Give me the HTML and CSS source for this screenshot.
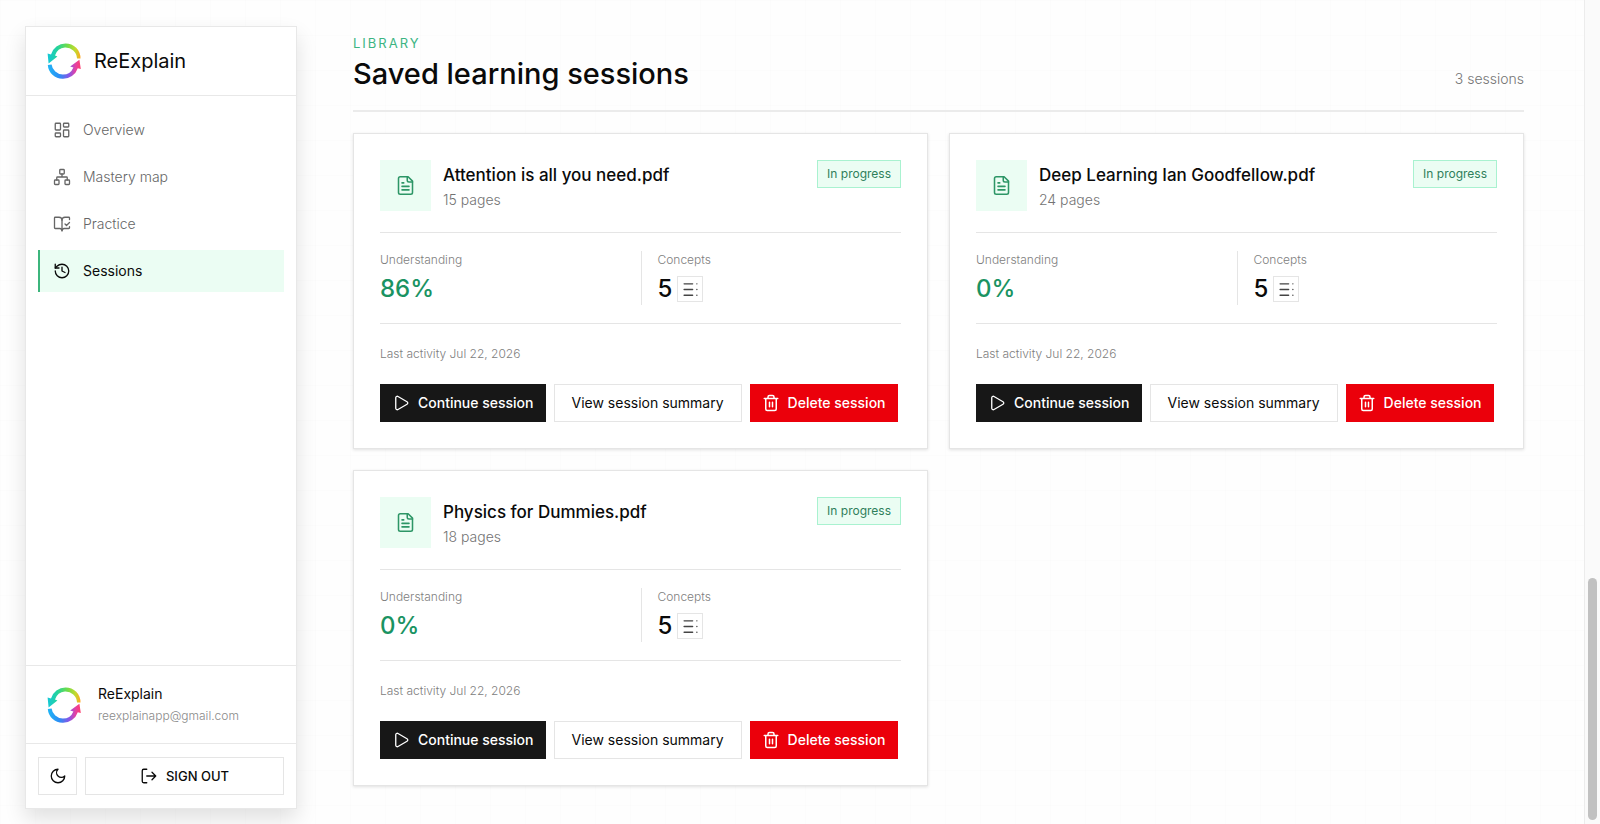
FILE: index.html
```html
<!DOCTYPE html>
<html lang="en">
<head>
  <meta charset="UTF-8">
  <meta name="viewport" content="width=device-width, initial-scale=1.0">
  <title>ReExplain - Saved learning sessions</title>
  <link rel="stylesheet" href="styles.css">
</head>
<body>
  <!-- Shared icons -->
  <svg class="sprite" aria-hidden="true">
    <defs>
      <linearGradient id="arc-top" x1="0" y1="0" x2="1" y2="0">
        <stop offset="0" stop-color="#14c8d8"/>
        <stop offset="0.3" stop-color="#25d39b"/>
        <stop offset="0.6" stop-color="#6fdc4a"/>
        <stop offset="0.85" stop-color="#c4d92e"/>
        <stop offset="1" stop-color="#ffa51f"/>
      </linearGradient>
      <linearGradient id="arc-bottom" x1="0" y1="0" x2="1" y2="0">
        <stop offset="0" stop-color="#1fb6f5"/>
        <stop offset="0.35" stop-color="#2b8df5"/>
        <stop offset="0.65" stop-color="#8a55e6"/>
        <stop offset="0.85" stop-color="#e8409f"/>
        <stop offset="1" stop-color="#ff3d6e"/>
      </linearGradient>
    </defs>
    <symbol id="logo" viewBox="0 0 34 36">
      <path fill="url(#arc-top)" d="M.6 10.4 L4 11.4 A15.5 15.5 0 0 1 18.5 .4 A14.8 14.8 0 0 1 33.5 15.6 L30 15.6 A11.5 11.5 0 0 0 18 4.6 A11.5 11.5 0 0 0 8 12.6 L10.4 13.6 L1.6 20.4 Z"/>
      <path fill="url(#arc-bottom)" d="M33.8 26 L30.8 25.2 A15.5 15.5 0 0 1 15.5 35.8 A14.8 14.8 0 0 1 .8 22 L4.6 21.4 A11.5 11.5 0 0 0 15.8 31.6 A11.5 11.5 0 0 0 26.4 24.4 L23.2 23.6 L32.4 16.8 Z"/>
    </symbol>
    <symbol id="file" viewBox="0 0 24 24">
      <path d="M15 2H6a2 2 0 0 0-2 2v16a2 2 0 0 0 2 2h12a2 2 0 0 0 2-2V7Z"/>
      <path d="M14 2v4a2 2 0 0 0 2 2h4M10 9H8M16 13H8M16 17H8"/>
    </symbol>
    <symbol id="list" viewBox="0 0 24 24">
      <path d="M3 4h12M3 12h12M3 20h12M21 4h.01M21 12h.01M21 20h.01"/>
    </symbol>
    <symbol id="play" viewBox="0 0 24 24">
      <path d="M5 5a2 2 0 0 1 3.008-1.728l11.997 6.998a2 2 0 0 1 .003 3.458l-12 7A2 2 0 0 1 5 19z"/>
    </symbol>
    <symbol id="trash" viewBox="0 0 24 24">
      <path d="M3 6h18M19 6v14a2 2 0 0 1-2 2H7a2 2 0 0 1-2-2V6M8 6V4a2 2 0 0 1 2-2h4a2 2 0 0 1 2 2v2M10 11v6M14 11v6"/>
    </symbol>
  </svg>

  <div class="app">
    <aside class="sidebar">
      <div class="brand">
        <svg class="logo"><use href="#logo"/></svg>
        <span class="brand-name">ReExplain</span>
      </div>

      <nav class="nav">
        <a class="nav-link" href="#overview">
          <svg class="icon" viewBox="0 0 24 24"><rect width="7" height="9" x="3" y="3" rx="1"/><rect width="7" height="5" x="14" y="3" rx="1"/><rect width="7" height="9" x="14" y="12" rx="1"/><rect width="7" height="5" x="3" y="16" rx="1"/></svg>
          Overview
        </a>
        <a class="nav-link" href="#mastery">
          <svg class="icon" viewBox="0 0 24 24"><rect x="16" y="16" width="6" height="6" rx="1"/><rect x="2" y="16" width="6" height="6" rx="1"/><rect x="9" y="2" width="6" height="6" rx="1"/><path d="M5 16v-3a1 1 0 0 1 1-1h12a1 1 0 0 1 1 1v3M12 12V8"/></svg>
          Mastery map
        </a>
        <a class="nav-link" href="#practice">
          <svg class="icon" viewBox="0 0 24 24"><path d="M12 21V7M16 12l2 2 4-4"/><path d="M22 6V4a1 1 0 0 0-1-1h-5a4 4 0 0 0-4 4 4 4 0 0 0-4-4H3a1 1 0 0 0-1 1v13a1 1 0 0 0 1 1h6a3 3 0 0 1 3 3 3 3 0 0 1 3-3h6a1 1 0 0 0 1-1v-1.3"/></svg>
          Practice
        </a>
        <a class="nav-link active" href="#sessions" aria-current="page">
          <svg class="icon" viewBox="0 0 24 24"><path d="M3 12a9 9 0 1 0 9-9 9.75 9.75 0 0 0-6.74 2.74L3 8"/><path d="M3 3v5h5M12 7v5l4 2"/></svg>
          Sessions
        </a>
      </nav>

      <div class="account">
        <svg class="logo"><use href="#logo"/></svg>
        <div>
          <div class="account-name">ReExplain</div>
          <div class="account-email">reexplainapp@gmail.com</div>
        </div>
      </div>

      <div class="sidebar-actions">
        <button class="btn btn-theme" type="button" aria-label="Toggle theme">
          <svg class="icon" viewBox="0 0 24 24"><path d="M12 3a6 6 0 0 0 9 9 9 9 0 1 1-9-9Z"/></svg>
        </button>
        <button class="btn btn-signout" type="button">
          <svg class="icon" viewBox="0 0 24 24"><path d="M9 21H5a2 2 0 0 1-2-2V5a2 2 0 0 1 2-2h4M16 17l5-5-5-5M21 12H9"/></svg>
          SIGN OUT
        </button>
      </div>
    </aside>

    <main class="content">
      <header class="page-header">
        <div>
          <p class="eyebrow">LIBRARY</p>
          <h1>Saved learning sessions</h1>
        </div>
        <span class="count">3 sessions</span>
      </header>

      <section class="session-grid">
        <article class="card">
          <div class="card-header">
            <div class="file-icon"><svg class="icon"><use href="#file"/></svg></div>
            <div class="card-title">
              <h2>Attention is all you need.pdf</h2>
              <p>15 pages</p>
            </div>
            <span class="badge">In progress</span>
          </div>
          <div class="stats">
            <div class="stat">
              <span class="label">Understanding</span>
              <div class="value score">86%</div>
            </div>
            <div class="stat">
              <span class="label">Concepts</span>
              <div class="value">5 <button class="list-btn" type="button" aria-label="Show concepts"><svg class="icon"><use href="#list"/></svg></button></div>
            </div>
          </div>
          <p class="activity">Last activity Jul 22, 2026</p>
          <div class="actions">
            <button class="btn btn-primary" type="button"><svg class="icon"><use href="#play"/></svg>Continue session</button>
            <button class="btn btn-summary" type="button">View session summary</button>
            <button class="btn btn-danger" type="button"><svg class="icon"><use href="#trash"/></svg>Delete session</button>
          </div>
        </article>

        <article class="card">
          <div class="card-header">
            <div class="file-icon"><svg class="icon"><use href="#file"/></svg></div>
            <div class="card-title">
              <h2>Deep Learning Ian Goodfellow.pdf</h2>
              <p>24 pages</p>
            </div>
            <span class="badge">In progress</span>
          </div>
          <div class="stats">
            <div class="stat">
              <span class="label">Understanding</span>
              <div class="value score">0%</div>
            </div>
            <div class="stat">
              <span class="label">Concepts</span>
              <div class="value">5 <button class="list-btn" type="button" aria-label="Show concepts"><svg class="icon"><use href="#list"/></svg></button></div>
            </div>
          </div>
          <p class="activity">Last activity Jul 22, 2026</p>
          <div class="actions">
            <button class="btn btn-primary" type="button"><svg class="icon"><use href="#play"/></svg>Continue session</button>
            <button class="btn btn-summary" type="button">View session summary</button>
            <button class="btn btn-danger" type="button"><svg class="icon"><use href="#trash"/></svg>Delete session</button>
          </div>
        </article>

        <article class="card">
          <div class="card-header">
            <div class="file-icon"><svg class="icon"><use href="#file"/></svg></div>
            <div class="card-title">
              <h2>Physics for Dummies.pdf</h2>
              <p>18 pages</p>
            </div>
            <span class="badge">In progress</span>
          </div>
          <div class="stats">
            <div class="stat">
              <span class="label">Understanding</span>
              <div class="value score">0%</div>
            </div>
            <div class="stat">
              <span class="label">Concepts</span>
              <div class="value">5 <button class="list-btn" type="button" aria-label="Show concepts"><svg class="icon"><use href="#list"/></svg></button></div>
            </div>
          </div>
          <p class="activity">Last activity Jul 22, 2026</p>
          <div class="actions">
            <button class="btn btn-primary" type="button"><svg class="icon"><use href="#play"/></svg>Continue session</button>
            <button class="btn btn-summary" type="button">View session summary</button>
            <button class="btn btn-danger" type="button"><svg class="icon"><use href="#trash"/></svg>Delete session</button>
          </div>
        </article>
      </section>
    </main>

    <div class="scroll-track"><div class="scroll-thumb"></div></div>
  </div>
</body>
</html>
```
FILE: styles.css
```css
* {
  box-sizing: border-box;
}
body {
  margin: 0;
  font-family: Inter, "Liberation Sans", sans-serif;
  font-size: 14px;
  line-height: 20px;
  color: #0a0a0a;
  background-color: #fefefe;
  background-image:
    linear-gradient(to right, rgba(0, 0, 0, 0.006) 1px, transparent 1px),
    linear-gradient(to bottom, rgba(0, 0, 0, 0.006) 1px, transparent 1px);
  background-size: 35px 35px;
}
h1, h2, p {
  margin: 0;
  font-weight: 500;
}
button {
  font: inherit;
  color: inherit;
  cursor: pointer;
}
.sprite {
  position: absolute;
  width: 0;
  height: 0;
}
.icon {
  width: 18px;
  height: 18px;
  flex: none;
  fill: none;
  stroke: currentColor;
  stroke-width: 1.75;
  stroke-linecap: round;
  stroke-linejoin: round;
}
.logo {
  width: 34px;
  height: 36px;
  flex: none;
}
.app {
  display: flex;
  min-height: 100vh;
}

/* Sidebar */
.sidebar {
  position: sticky;
  top: 26px;
  display: flex;
  flex-direction: column;
  width: 272px;
  height: calc(100vh - 41px);
  margin: 26px 0 0 25px;
  flex: none;
  background: #fff;
  border: 1px solid #e8e8e8;
  box-shadow: 0 10px 20px rgba(0, 0, 0, 0.12);
}
.brand {
  display: flex;
  align-items: center;
  gap: 13px;
  height: 69px;
  padding: 0 21px;
  border-bottom: 1px solid #e8e8e8;
}
.brand-name {
  font-size: 20px;
  font-weight: 400;
}
.nav {
  display: flex;
  flex-direction: column;
  flex: 1;
  gap: 5px;
  padding: 13px 12px;
}
.nav-link {
  display: flex;
  align-items: center;
  gap: 12px;
  height: 42px;
  padding: 0 13px;
  border-left: 2px solid transparent;
  font-weight: 300;
  color: #666;
  text-decoration: none;
}
.nav-link.active {
  border-left-color: #3cb57c;
  background: #ebfdf3;
  font-weight: 400;
  color: #0a0a0a;
}
.account {
  display: flex;
  align-items: center;
  gap: 17px;
  height: 78px;
  padding: 0 21px;
  border-top: 1px solid #e8e8e8;
}
.account-email {
  margin-top: 2px;
  font-size: 12px;
  font-weight: 300;
  color: #8a8a8a;
}
.sidebar-actions {
  display: flex;
  gap: 8px;
  padding: 13px 12px;
  border-top: 1px solid #e8e8e8;
}

/* Buttons */
.btn {
  display: flex;
  align-items: center;
  justify-content: center;
  gap: 8px;
  height: 38px;
  padding: 0 11px;
  border: 1px solid #e5e5e5;
  background: #fff;
}
.btn-theme {
  width: 39px;
  padding: 0;
}
.btn-signout {
  flex: 1;
  font-size: 13px;
  font-weight: 500;
}
.btn-primary {
  border-color: #171717;
  background: #171717;
  font-weight: 500;
  color: #fff;
}
.btn-summary {
  padding: 0 17px;
}
.btn-danger {
  border-color: #eb000b;
  background: #eb000b;
  font-weight: 500;
  color: #fff;
}
.btn-danger .icon {
  stroke-width: 2;
}

/* Library page */
.content {
  flex: 1;
  min-width: 0;
  padding: 33px 60px 38px 56px;
}
.page-header {
  display: flex;
  justify-content: space-between;
  align-items: flex-end;
  margin-bottom: 21px;
  padding-bottom: 16px;
  border-bottom: 2px solid #ebebeb;
}
.eyebrow {
  font-size: 13px;
  font-weight: 400;
  letter-spacing: 2px;
  color: #3cb583;
}
h1 {
  font-size: 29px;
  line-height: 41px;
}
.count {
  padding-bottom: 5px;
  font-weight: 300;
  color: #737373;
}
.session-grid {
  display: grid;
  grid-template-columns: 1fr 1fr;
  gap: 21px;
}
.card {
  padding: 26px;
  border: 1px solid #e5e5e5;
  background: #fff;
  box-shadow: 0 1px 3px rgba(0, 0, 0, 0.12);
}
.card-header {
  display: flex;
  align-items: flex-start;
  gap: 12px;
  padding-bottom: 21px;
}
.file-icon {
  display: flex;
  align-items: center;
  justify-content: center;
  width: 51px;
  height: 51px;
  background: #ebfdf3;
  color: #2d9666;
}
.file-icon .icon {
  width: 21px;
  height: 21px;
}
.card-title {
  flex: 1;
  min-width: 0;
}
.card-title h2 {
  font-size: 17px;
  line-height: 30px;
}
.card-title p {
  font-weight: 300;
  color: #737373;
}
.badge {
  padding: 3px 9px;
  border: 1px solid #a9f2d0;
  background: #ebfdf3;
  font-size: 12px;
  color: #2f7f5b;
}
.stats {
  display: grid;
  grid-template-columns: 1fr 1fr;
  padding: 18px 0;
  border-top: 1px solid #e5e5e5;
  border-bottom: 1px solid #e5e5e5;
}
.stat + .stat {
  padding-left: 16px;
  border-left: 1px solid #e5e5e5;
}
.label {
  display: block;
  font-size: 12px;
  line-height: 17px;
  font-weight: 300;
  color: #808080;
}
.value {
  display: flex;
  align-items: center;
  gap: 5px;
  height: 37px;
  padding-top: 5px;
  font-size: 24px;
  font-weight: 500;
}
.score {
  color: #1a9362;
}
.list-btn {
  display: flex;
  align-items: center;
  justify-content: center;
  width: 26px;
  height: 26px;
  padding: 0;
  border: 1px solid #e5e5e5;
  background: #fff;
  color: #444;
}
.list-btn .icon {
  width: 17px;
  height: 17px;
  stroke-width: 2;
}
.activity {
  margin: 20px 0;
  font-size: 12px;
  font-weight: 300;
  color: #808080;
}
.actions {
  display: flex;
  flex-wrap: wrap;
  gap: 8px;
}

/* Scroll bar */
.scroll-track {
  position: sticky;
  top: 0;
  display: flex;
  align-items: flex-end;
  justify-content: center;
  width: 16px;
  height: 100vh;
  padding-bottom: 4px;
  flex: none;
  border-left: 1px solid #ececec;
  background: #fafafa;
}
.scroll-thumb {
  width: 9px;
  height: 29.5%;
  border-radius: 5px;
  background: #c1c1c1;
}

@media (max-width: 1200px) {
  .session-grid {
    grid-template-columns: 1fr;
  }
}
```
